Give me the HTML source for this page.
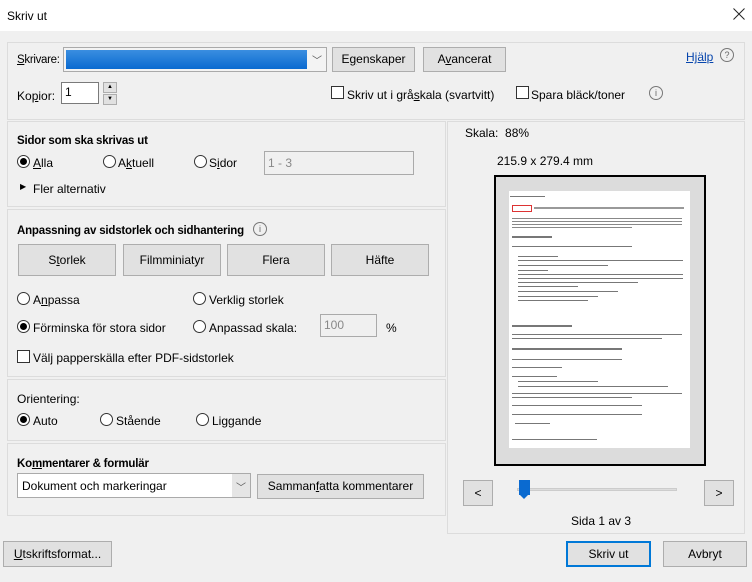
<!DOCTYPE html>
<html><head><meta charset="utf-8"><style>
*{box-sizing:border-box;margin:0;padding:0}
body{width:752px;height:582px;background:#f0f0f0;font-family:"Liberation Sans",sans-serif;font-size:12px;color:#000;position:relative;overflow:hidden}
.a{position:absolute;white-space:nowrap}
.panel{position:absolute;border:1px solid #dcdcdc;background:#f0f0f0}
.btn{position:absolute;background:#e1e1e1;border:1px solid #adadad;text-align:center;font-size:12px}
.rb{position:absolute;width:13px;height:13px;border:1px solid #333;border-radius:50%;background:#fff}
.rb.on::after{content:"";position:absolute;left:2px;top:2px;width:7px;height:7px;border-radius:50%;background:#000}
.cb{position:absolute;width:13px;height:13px;border:1px solid #333;background:#fff}
.inp{position:absolute;background:#fff;border:1px solid #7a7a7a}
.dis{background:#f0f0f0;border:1px solid #ccc;color:#888}
b{font-weight:bold;font-size:11.5px;letter-spacing:-0.2px}
.info{position:absolute;width:14px;height:14px;border:1px solid #777;border-radius:50%;font-size:9px;text-align:center;line-height:12px;color:#666}
.ln{position:absolute;height:2px;background:#777}
</style></head><body>
<div style="position:absolute;left:0;top:0;width:752px;height:31px;background:#fff"></div>
<div class="a" style="left:7px;top:9px;font-size:12px">Skriv ut</div>
<svg style="position:absolute;left:733px;top:8px" width="12" height="12" viewBox="0 0 12 12"><path d="M0.5 0.5L11.5 11.5M11.5 0.5L0.5 11.5" stroke="#222" stroke-width="1"/></svg>

<div class="panel" style="left:7px;top:42px;width:738px;height:78px"></div>
<div class="a" style="left:17px;top:54px;font-size:11.5px;letter-spacing:-0.3px"><u>S</u>krivare:</div>
<div class="inp" style="left:63px;top:47px;width:264px;height:25px;border-color:#aaa;background:#f3f3f3"></div>
<div style="position:absolute;left:66px;top:50px;width:241px;height:19px;background:linear-gradient(#3a8ee0,#0a6ad0)"></div>
<div class="a" style="left:312px;top:52px;color:#555;font-size:10px">﹀</div>
<div class="btn" style="left:332px;top:47px;width:83px;height:25px;line-height:23px">E<u>g</u>enskaper</div>
<div class="btn" style="left:423px;top:47px;width:83px;height:25px;line-height:23px">A<u>v</u>ancerat</div>
<div class="a" style="left:686px;top:50px;color:#0645ad;text-decoration:underline">Hjälp</div>
<div class="info" style="left:720px;top:48px">?</div>
<div class="a" style="left:17px;top:89px">Ko<u>p</u>ior:</div>
<div class="inp" style="left:61px;top:82px;width:38px;height:22px;padding:2px 3px">1</div>
<div class="btn" style="left:103px;top:82px;width:14px;height:11px;font-size:6px;line-height:9px">▲</div>
<div class="btn" style="left:103px;top:94px;width:14px;height:11px;font-size:6px;line-height:9px">▼</div>
<div class="cb" style="left:331px;top:86px"></div>
<div class="a" style="left:347px;top:88px">Skriv ut i grå<u>s</u>kala (svartvitt)</div>
<div class="cb" style="left:516px;top:86px"></div>
<div class="a" style="left:531px;top:88px">Spara bläck/toner</div>
<div class="info" style="left:649px;top:86px">i</div>

<div class="panel" style="left:7px;top:121px;width:439px;height:86px"></div>
<div class="a" style="left:17px;top:133px"><b>Sidor som ska skrivas ut</b></div>
<div class="rb on" style="left:17px;top:155px"></div><div class="a" style="left:33px;top:156px"><u>A</u>lla</div>
<div class="rb" style="left:103px;top:155px"></div><div class="a" style="left:118px;top:156px">A<u>k</u>tuell</div>
<div class="rb" style="left:194px;top:155px"></div><div class="a" style="left:209px;top:156px">S<u>i</u>dor</div>
<div class="inp dis" style="left:264px;top:151px;width:150px;height:24px;padding:4px 3px;border-color:#aaa">1 - 3</div>
<div class="a" style="left:20px;top:182px;font-size:8px">▶</div>
<div class="a" style="left:33px;top:182px">Fler alternativ</div>

<div class="panel" style="left:7px;top:209px;width:439px;height:168px"></div>
<div class="a" style="left:17px;top:223px"><b>Anpassning av sidstorlek och sidhantering</b></div>
<div class="info" style="left:253px;top:222px">i</div>
<div class="btn" style="left:18px;top:244px;width:98px;height:32px;line-height:30px">S<u>t</u>orlek</div>
<div class="btn" style="left:123px;top:244px;width:98px;height:32px;line-height:30px">Filmminiatyr</div>
<div class="btn" style="left:227px;top:244px;width:98px;height:32px;line-height:30px">Flera</div>
<div class="btn" style="left:331px;top:244px;width:98px;height:32px;line-height:30px">Häfte</div>
<div class="rb" style="left:17px;top:292px"></div><div class="a" style="left:33px;top:293px">A<u>n</u>passa</div>
<div class="rb" style="left:193px;top:292px"></div><div class="a" style="left:209px;top:293px">Verklig storlek</div>
<div class="rb on" style="left:17px;top:320px"></div><div class="a" style="left:33px;top:321px">Förminska för stora sidor</div>
<div class="rb" style="left:193px;top:320px"></div><div class="a" style="left:209px;top:321px">Anpassad skala:</div>
<div class="inp dis" style="left:320px;top:314px;width:57px;height:23px;padding:3px;border-color:#aaa">100</div>
<div class="a" style="left:386px;top:321px">%</div>
<div class="cb" style="left:17px;top:350px"></div><div class="a" style="left:33px;top:351px">Väl<u>j</u> papperskälla efter PDF-sidstorlek</div>

<div class="panel" style="left:7px;top:379px;width:439px;height:62px"></div>
<div class="a" style="left:17px;top:392px">Orientering:</div>
<div class="rb on" style="left:17px;top:413px"></div><div class="a" style="left:33px;top:414px">Auto</div>
<div class="rb" style="left:100px;top:413px"></div><div class="a" style="left:116px;top:414px">Stående</div>
<div class="rb" style="left:196px;top:413px"></div><div class="a" style="left:212px;top:414px">Liggande</div>

<div class="panel" style="left:7px;top:443px;width:439px;height:73px"></div>
<div class="a" style="left:17px;top:456px"><b>Ko<u>m</u>mentarer &amp; formulär</b></div>
<div class="inp" style="left:17px;top:473px;width:234px;height:25px;border-color:#aaa;padding:5px 4px">Dokument och markeringar</div>
<div style="position:absolute;left:232px;top:474px;width:18px;height:23px;background:#e5e5e5"></div>
<div class="a" style="left:236px;top:479px;color:#555;font-size:10px">﹀</div>
<div class="btn" style="left:257px;top:474px;width:167px;height:25px;line-height:23px">Samman<u>f</u>atta kommentarer</div>

<div class="panel" style="left:447px;top:121px;width:298px;height:413px"></div>
<div class="a" style="left:465px;top:126px">Skala:&nbsp; 88%</div>
<div class="a" style="left:497px;top:154px">215.9 x 279.4 mm</div>
<div style="position:absolute;left:494px;top:175px;width:212px;height:291px;border:2px solid #000;background:#dcdcdc"></div>
<div style="position:absolute;left:509px;top:191px;width:181px;height:257px;background:#fff"></div>
<div class="ln" style="left:510px;top:196px;width:35px;height:1px"></div>
<div style="position:absolute;left:512px;top:205px;width:20px;height:7px;border:1px solid #d33"></div>
<div class="ln" style="left:534px;top:207px;width:150px;background:#999"></div>
<div class="ln" style="left:512px;top:218px;width:170px;height:1px;background:#888"></div>
<div class="ln" style="left:512px;top:221px;width:170px;height:1px;background:#888"></div>
<div class="ln" style="left:512px;top:224px;width:170px;height:1px;background:#888"></div>
<div class="ln" style="left:512px;top:227px;width:120px;height:1px;background:#888"></div>
<div class="ln" style="left:512px;top:236px;width:40px"></div>
<div class="ln" style="left:512px;top:246px;width:120px;height:1px"></div>
<div class="ln" style="left:518px;top:256px;width:40px;height:1px"></div>
<div class="ln" style="left:518px;top:260px;width:165px;height:1px"></div>
<div class="ln" style="left:518px;top:265px;width:90px;height:1px"></div>
<div class="ln" style="left:518px;top:270px;width:30px;height:1px"></div>
<div class="ln" style="left:518px;top:274px;width:165px;height:1px"></div>
<div class="ln" style="left:518px;top:278px;width:165px;height:1px"></div>
<div class="ln" style="left:518px;top:282px;width:120px;height:1px"></div>
<div class="ln" style="left:518px;top:286px;width:60px;height:1px"></div>
<div class="ln" style="left:518px;top:291px;width:100px;height:1px"></div>
<div class="ln" style="left:518px;top:296px;width:80px;height:1px"></div>
<div class="ln" style="left:518px;top:300px;width:70px;height:1px"></div>
<div class="ln" style="left:512px;top:325px;width:60px"></div>
<div class="ln" style="left:512px;top:334px;width:170px;height:1px"></div>
<div class="ln" style="left:512px;top:338px;width:150px;height:1px"></div>
<div class="ln" style="left:512px;top:348px;width:110px"></div>
<div class="ln" style="left:512px;top:359px;width:110px;height:1px"></div>
<div class="ln" style="left:512px;top:367px;width:50px;height:1px"></div>
<div class="ln" style="left:512px;top:376px;width:45px;height:1px"></div>
<div class="ln" style="left:518px;top:381px;width:80px;height:1px"></div>
<div class="ln" style="left:518px;top:386px;width:150px;height:1px"></div>
<div class="ln" style="left:512px;top:393px;width:170px;height:1px"></div>
<div class="ln" style="left:512px;top:397px;width:120px;height:1px"></div>
<div class="ln" style="left:512px;top:405px;width:130px;height:1px"></div>
<div class="ln" style="left:512px;top:414px;width:130px;height:1px"></div>
<div class="ln" style="left:515px;top:423px;width:35px;height:1px"></div>
<div class="ln" style="left:512px;top:439px;width:85px;height:1px"></div>

<div class="btn" style="left:463px;top:480px;width:30px;height:26px;line-height:24px">&lt;</div>
<div style="position:absolute;left:517px;top:488px;width:160px;height:3px;background:#ddd;border:1px solid #ccc"></div>
<div style="position:absolute;left:519px;top:480px;width:11px;height:15px;background:#0a6ad0"></div>
<div style="position:absolute;left:519px;top:494px;width:0;height:0;border-left:5.5px solid transparent;border-right:5.5px solid transparent;border-top:5px solid #0a6ad0"></div>
<div class="btn" style="left:704px;top:480px;width:30px;height:26px;line-height:24px">&gt;</div>
<div class="a" style="left:571px;top:514px">Sida 1 av 3</div>

<div class="btn" style="left:3px;top:541px;width:109px;height:26px;line-height:24px"><u>U</u>tskriftsformat...</div>
<div class="btn" style="left:566px;top:541px;width:85px;height:26px;line-height:22px;border:2px solid #0078d7">Skriv ut</div>
<div class="btn" style="left:663px;top:541px;width:84px;height:26px;line-height:24px">Avbryt</div>
</body></html>
